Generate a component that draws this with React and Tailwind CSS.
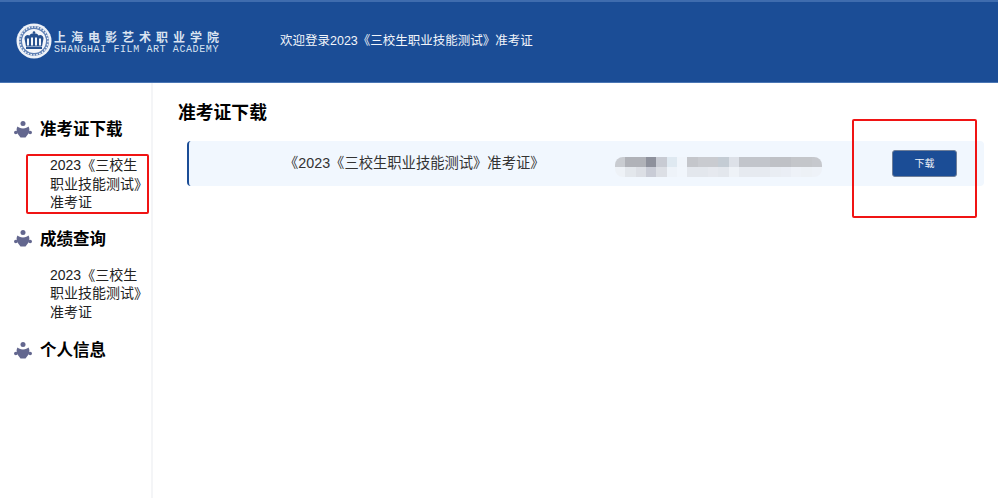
const FONT = '"Liberation Sans", "Noto Sans CJK SC", sans-serif';

// mosaic covering the blurred id number
const topRow = ['#c9ccd1', '#b0b2b8', '#b0b2b8', '#8e919c', '#c8cbd3', '#dfe9f1', '#f0f5fb', '#c4c6cb', '#c9cbd0', '#c9cbd0', '#c4ccd4', '#dde1e8', '#c2c5cb', '#c2c5cb', '#c2c5cb', '#bfc1c6', '#bfc1c6', '#c4c6ca', '#c4c6ca', '#c6c8cd'];
const bottomRow = ['#eef2f7', '#e3e7ec', '#dcdfe5', '#c9ccd6', '#dcdfe5', '#eef3f9', '#f1f6fc', '#e3e7ed', '#e3e7ed', '#e6e9ef', '#e3e7ed', '#eef2f7', '#e6eaf0', '#e6eaf0', '#e6eaf0', '#e9edf3', '#eaeef5', '#eef2f8', '#edf1f6', '#eef2f8'];

function Logo() {
  return (
    <svg width="36" height="36" viewBox="0 0 36 36">
      <circle cx="18" cy="18" r="17.500" fill="#eef2f8" />
      <circle cx="18" cy="18" r="15" fill="#5f80b4" />
      <circle cx="18" cy="18" r="14" fill="none" stroke="#eef2f8" strokeWidth="1.500" strokeDasharray="1.500 1.500" />
      <circle cx="18" cy="18" r="12" fill="#f4f6fa" />
      <path d="M8.500 15.500c0-3 3-4.500 5-3 1-3 8-3 9 0 2-1.500 5 0 5 3l-1.500 8H10z" fill="#27518f" />
      <path d="M12 15.500v7M16 14.500v8M20 14.500v8M24 15.500v7" stroke="#f4f6fa" strokeWidth="2" />
      <path d="M10 25h16" stroke="#27518f" strokeWidth="2" />
      <circle cx="18" cy="9.500" r="1.300" fill="#27518f" />
    </svg>
  );
}

function PeopleIcon() {
  return (
    <svg width="18" height="17" viewBox="0 0 18 17" fill="#63678f">
      <circle cx="9" cy="2.500" r="2.500" />
      <path d="M3.500 5.500c1.500.8 2.500 2 5.500 2s4-1.200 5.500-2c1.200 1.500 1.200 5 0 7l-3 4h-5l-3-4c-1.200-2-1.200-5.500 0-7z" />
      <circle cx="1.800" cy="11.500" r="1.800" />
      <circle cx="16.200" cy="11.500" r="1.800" />
    </svg>
  );
}

function NavHeading({ title }) {
  return (
    <div className="flex items-center h-[24px] pl-[14px]">
      <PeopleIcon />
      <span className="ml-[8px] text-[16.500px] font-bold text-black leading-[24px]">{title}</span>
    </div>
  );
}

function NavLink() {
  return (
    <div className="pl-[50px] text-[14px] leading-[18.500px] text-[#222] whitespace-nowrap">
      2023《三校生<br />职业技能测试》<br />准考证
    </div>
  );
}

export default function App() {
  return (
    <div className="relative w-[998px] h-[498px] bg-white overflow-hidden" style={{ fontFamily: FONT }}>
      <header className="flex items-center h-[83px] bg-[#1b4d96] border-t-2 border-t-[#3f6cae] border-b border-b-[#4a76b4]">
        <div className="ml-[16px] mb-[3px]">
          <Logo />
        </div>
        <div className="ml-[2px] w-[170px] text-[#d9e3f1]">
          <div className="text-[12px] leading-[13px] font-bold tracking-[5px] whitespace-nowrap" style={{ fontFamily: '"Noto Sans CJK SC", sans-serif' }}>上海电影艺术职业学院</div>
          <div className="text-[10px] leading-[10px] tracking-[0.600px] whitespace-nowrap mt-[2px]" style={{ fontFamily: '"Liberation Mono", monospace' }}>SHANGHAI FILM ART ACADEMY</div>
        </div>
        <div className="ml-[56px] mb-[2px] text-[12.500px] text-[#f2f5fa] whitespace-nowrap">欢迎登录2023《三校生职业技能测试》准考证</div>
      </header>

      <div className="flex h-[415px]">
        <aside className="w-[153px] shrink-0 border-r-2 border-r-[#f4f5f7] pt-[34px]">
          <NavHeading title="准考证下载" />
          <div className="mt-[15px]">
            <NavLink />
          </div>
          <div className="mt-[15px]">
            <NavHeading title="成绩查询" />
          </div>
          <div className="mt-[15px]">
            <NavLink />
          </div>
          <div className="mt-[17px]">
            <NavHeading title="个人信息" />
          </div>
        </aside>

        <main className="flex-1 pl-[25px] pr-[14px] pt-[18px]">
          <h2 className="text-[17.800px] font-bold leading-[24px] text-black">准考证下载</h2>
          <div className="flex items-center h-[45px] mt-[16px] ml-[9px] bg-[#f1f7fe] border-l-2 border-l-[#1b4d96] rounded-[4px]">
            <div className="ml-[95px] mt-[1px] w-[331px] text-[14.300px] text-[#333] whitespace-nowrap">《2023《三校生职业技能测试》准考证》</div>
            <div className="relative flex flex-col w-[207px] h-[20px] mt-[7px] rounded-[8px] overflow-hidden">
              <div className="flex h-[10px]">
                {topRow.map((c, i) => <div key={i} className="flex-1" style={{ backgroundColor: c }} />)}
              </div>
              <div className="flex h-[10px]">
                {bottomRow.map((c, i) => <div key={i} className="flex-1" style={{ backgroundColor: c }} />)}
              </div>
            </div>
            <button className="ml-[70px] w-[65px] h-[27px] rounded-[3px] bg-[#1b4d96] border border-[#6f7f99] text-[10px] text-[#f2f5fa]">下载</button>
          </div>
        </main>
      </div>

      {/* red annotation boxes drawn over the screenshot */}
      <div className="absolute left-[26px] top-[154px] w-[123px] h-[60px] border-2 border-[#f01414] rounded-[2px]" />
      <div className="absolute left-[852px] top-[119px] w-[125px] h-[99px] border-2 border-[#f01414] rounded-[2px]" />
    </div>
  );
}
